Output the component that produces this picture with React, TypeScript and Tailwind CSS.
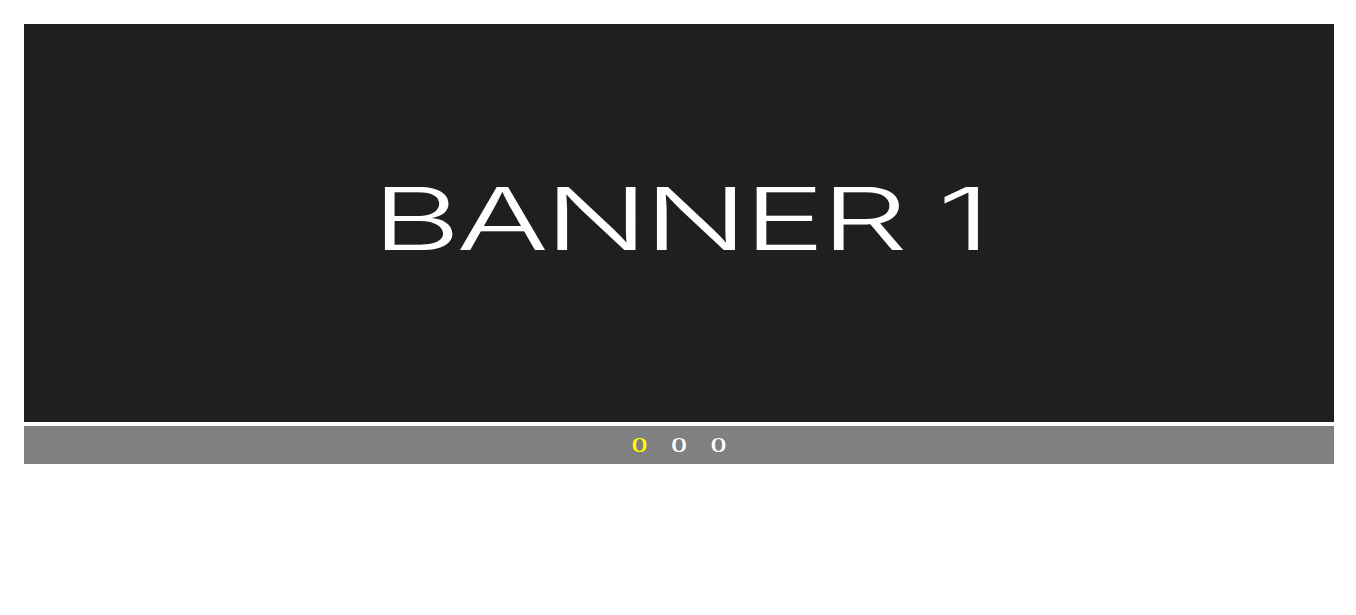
import { useState } from "react";

const slides = ["BANNER 1", "BANNER 2", "BANNER 3"];

export default function App() {
  const [current, setCurrent] = useState(0);

  return (
    <div className="min-h-screen bg-white p-6">
      {/* Slider */}
      <div className="w-[1310px]">
        <div className="h-[398px] bg-[#1f1f1f] flex items-center justify-center overflow-hidden">
          <div
            className="text-white text-[86px] leading-none font-light tracking-[-3px] scale-x-[1.6] pb-[8px] whitespace-nowrap"
            style={{ fontFamily: "Inter, 'Liberation Sans', sans-serif" }}
          >
            {slides[current]}
          </div>
        </div>

        {/* Pager */}
        <div className="mt-1 h-[38px] bg-[#808080] flex items-center justify-center gap-[24px]">
          {slides.map((s, i) => (
            <button
              key={s}
              onClick={() => setCurrent(i)}
              className={`text-[20px] font-bold leading-none ${
                i === current ? "text-[#ffff00]" : "text-white"
              }`}
              style={{ fontFamily: "'Liberation Serif', serif" }}
            >
              O
            </button>
          ))}
        </div>
      </div>
    </div>
  );
}
